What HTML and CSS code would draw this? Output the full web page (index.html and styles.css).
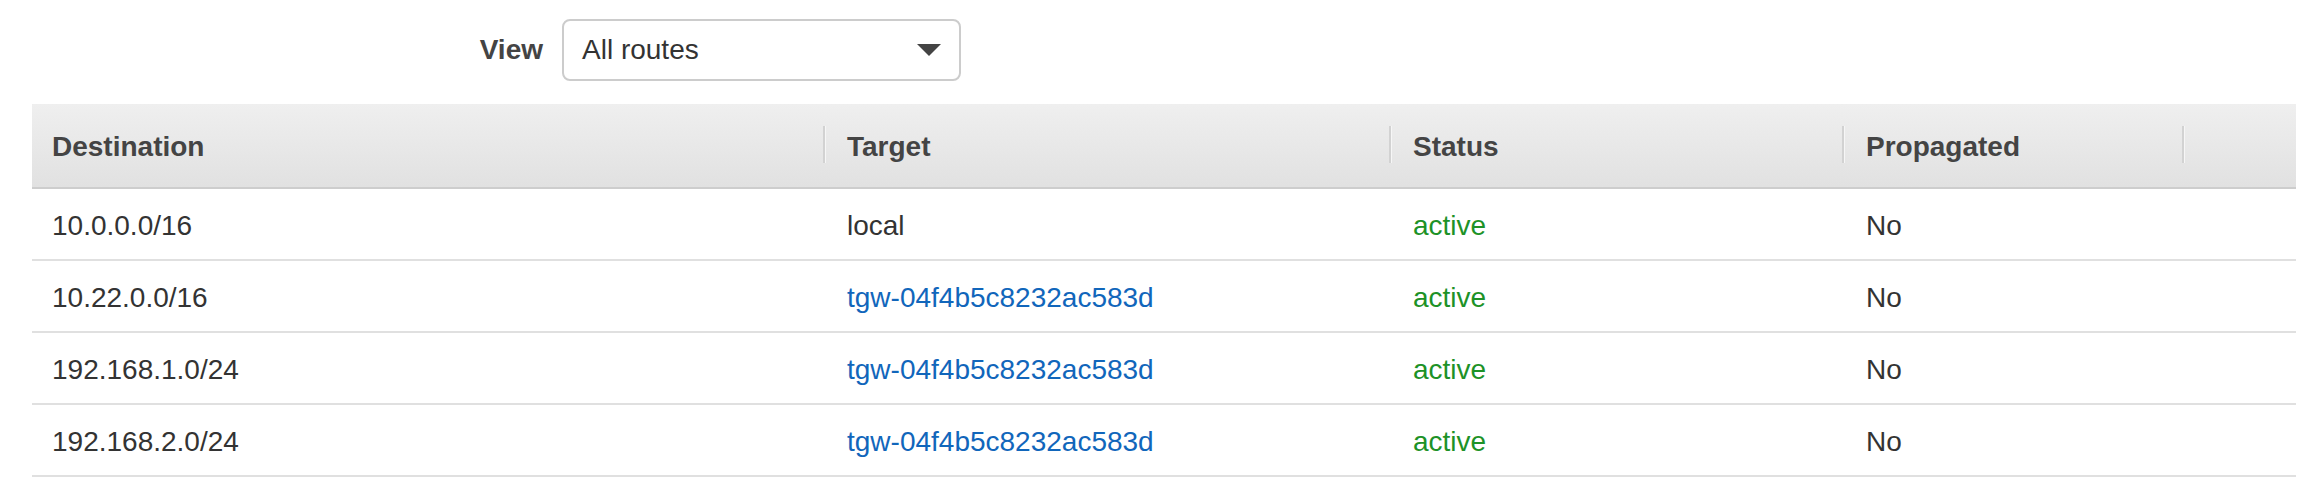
FILE: index.html
```html
<!DOCTYPE html>
<html lang="en">
<head>
<meta charset="utf-8">
<title>Routes</title>
<link rel="stylesheet" href="styles.css">
</head>
<body>
<div class="toolbar">
  <label class="view-label">View</label>
  <div class="select">
    <span class="select-value">All routes</span>
    <span class="select-arrow"></span>
  </div>
</div>
<table class="routes">
  <colgroup>
    <col class="c1"><col class="c2"><col class="c3"><col class="c4"><col class="c5">
  </colgroup>
  <thead>
    <tr>
      <th>Destination</th>
      <th class="sep">Target</th>
      <th class="sep">Status</th>
      <th class="sep">Propagated</th>
      <th class="sep"></th>
    </tr>
  </thead>
  <tbody>
    <tr>
      <td>10.0.0.0/16</td>
      <td>local</td>
      <td class="status">active</td>
      <td>No</td>
      <td></td>
    </tr>
    <tr>
      <td>10.22.0.0/16</td>
      <td><a class="link" href="#">tgw-04f4b5c8232ac583d</a></td>
      <td class="status">active</td>
      <td>No</td>
      <td></td>
    </tr>
    <tr>
      <td>192.168.1.0/24</td>
      <td><a class="link" href="#">tgw-04f4b5c8232ac583d</a></td>
      <td class="status">active</td>
      <td>No</td>
      <td></td>
    </tr>
    <tr>
      <td>192.168.2.0/24</td>
      <td><a class="link" href="#">tgw-04f4b5c8232ac583d</a></td>
      <td class="status">active</td>
      <td>No</td>
      <td></td>
    </tr>
  </tbody>
</table>
</body>
</html>
```
FILE: styles.css
```css
html, body {
  margin: 0;
  padding: 0;
  background: #ffffff;
}
body {
  font-family: "Liberation Sans", Arial, Helvetica, sans-serif;
  font-size: 28px;
  color: #333333;
}
.toolbar {
  display: flex;
  align-items: center;
  gap: 19px;
  padding-top: 19px;
  height: 62px;
  margin-bottom: 23px;
}
.view-label {
  width: 543px;
  text-align: right;
  font-weight: bold;
  color: #444444;
}
.select {
  box-sizing: border-box;
  width: 399px;
  height: 62px;
  border: 2px solid #cccccc;
  border-radius: 8px;
  display: flex;
  align-items: center;
  justify-content: space-between;
  padding: 0 18px 0 18px;
  color: #333333;
}
.select-arrow {
  width: 0;
  height: 0;
  border-left: 12px solid transparent;
  border-right: 12px solid transparent;
  border-top: 12px solid #444444;
}
.routes {
  margin-left: 32px;
  width: 2264px;
  table-layout: fixed;
  border-collapse: collapse;
  border-spacing: 0;
}
.c1 { width: 791px; }
.c2 { width: 566px; }
.c3 { width: 453px; }
.c4 { width: 340px; }
.c5 { width: 114px; }
.routes th {
  position: relative;
  height: 84px;
  padding: 2px 0 0 24px;
  text-align: left;
  font-weight: bold;
  color: #444444;
  background: linear-gradient(#efefef, #e1e1e1);
  border-bottom: 2px solid #cdcdcd;
  vertical-align: middle;
  box-sizing: border-box;
}
.routes th:first-child,
.routes td:first-child {
  padding-left: 20px;
}
.routes th.sep::before {
  content: "";
  position: absolute;
  left: 0;
  top: 22px;
  width: 2px;
  height: 37px;
  background: #d2d2d2;
  box-shadow: 1px 0 0 #f6f6f6;
}
.routes td {
  height: 72px;
  padding: 3px 0 0 24px;
  box-sizing: border-box;
  border-bottom: 2px solid #e0e0e0;
  vertical-align: middle;
  white-space: nowrap;
}
.status {
  color: #1d9227;
}
.link {
  color: #1166bb;
  text-decoration: none;
}
```
